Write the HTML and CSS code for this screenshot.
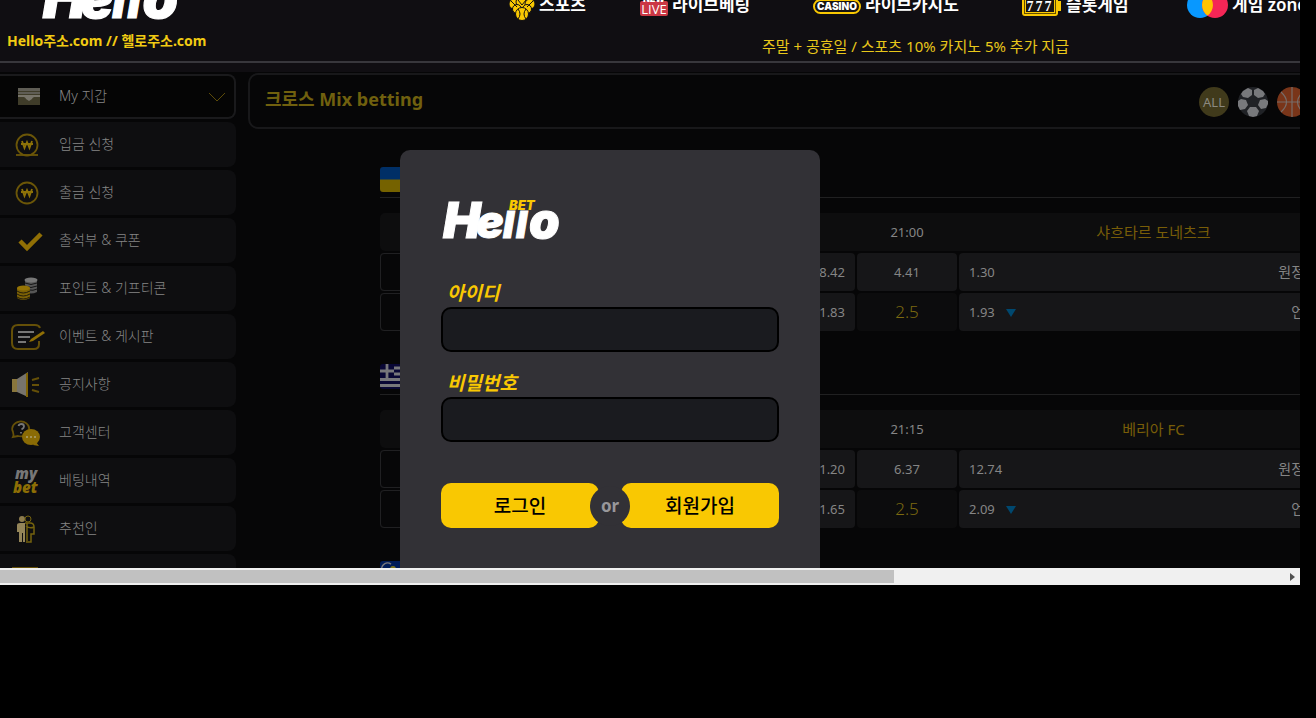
FILE: index.html
```
<!DOCTYPE html>
<html lang="ko">
<head>
<meta charset="utf-8">
<title>Hello BET</title>
<link rel="stylesheet" href="styles.css">
</head>
<body>
<svg class="defs" aria-hidden="true">
  <symbol id="logo" viewBox="0 0 120 44">
    <g class="logo-letters">
      <text x="2" y="40" font-size="50">H</text>
      <text x="35" y="40" font-size="46">e</text>
      <text x="62" y="40" font-size="37">l</text>
      <text x="75" y="40" font-size="37">l</text>
      <text x="88" y="40" font-size="49">o</text>
    </g>
    <text class="logo-bet" x="68" y="12" font-size="13">BET</text>
  </symbol>
</svg>
<div class="screen">
  <header class="header">
    <div class="brand">
      <svg class="brand-logo" role="img" aria-label="Hello BET"><use href="#logo"/></svg>
      <p class="address">Hello주소.com // 헬로주소.com</p>
    </div>
    <div class="top">
      <nav class="nav">
        <a href="#"><svg width="26" height="30" viewBox="0 0 26 30"><g fill="#f9c802" stroke="#100e12"><circle cx="5" cy="12" r="5"/><circle cx="13" cy="10" r="6"/><circle cx="21" cy="12" r="5"/><circle cx="8" cy="17" r="4.500"/><circle cx="18" cy="17" r="4.500"/><circle cx="13" cy="22" r="6.500"/></g><path d="M9 17q4 5 0 10M17 17q-4 5 0 10M2 9l6 6M24 9l-6 6M9 8l4 5 4-5" fill="none" stroke="#100e12"/></svg>스포츠</a>
        <a href="#"><svg width="28" height="24" viewBox="0 0 28 24"><rect y="9" width="28" height="15" rx="2" fill="#cb3744"/><text x="14" y="10" class="i-new">NEW</text><text x="14" y="22" class="i-live">LIVE</text></svg>라이브베팅</a>
        <a href="#"><svg width="48" height="23" viewBox="0 0 48 23"><rect x="1" y="8" width="46" height="13" rx="6.500" fill="#161413" stroke="#f9c802" stroke-width="2"/><text x="24" y="18" class="i-casino">CASINO</text></svg>라이브카지노</a>
        <a href="#"><svg width="40" height="24" viewBox="0 0 40 24"><rect y="1" width="36" height="23" rx="3" fill="#f9c802"/><rect x="2.500" y="3.500" width="31" height="18" fill="none" stroke="#624d00"/><rect x="4" y="8" width="28" height="12" fill="#171310"/><path d="M36 9h3v10h-3z" fill="#f9c802"/><text x="18" y="19" class="i-slot">777</text></svg>슬롯게임</a>
        <a href="#"><svg width="41" height="26" viewBox="0 0 41 26"><circle cx="13" cy="13" r="13" fill="#0898ff"/><circle cx="28" cy="13" r="13" fill="#f52656"/><path d="M20.500 2.400a13 13 0 0 1 0 21.200a13 13 0 0 1 0-21.200" fill="#ffc400"/></svg>게임 zone</a>
      </nav>
      <p class="notice">주말 + 공휴일 / 스포츠 10% 카지노 5% 추가 지급</p>
    </div>
  </header>

  <div class="body">
    <aside class="side">
      <a class="item wallet" href="#"><svg viewBox="0 0 36 36"><path d="M9 9h22v17H9z" fill="#3f3c29"/><path d="M9 9h22v3H9zM9 13h22v2H9z" fill="#5f5d55"/><path d="M9 16h22v2h-6q-2 1-2 2l-3 2-3-2q0-1-2-2H9z" fill="#77746a"/></svg><span>My 지갑</span><svg class="chev" viewBox="0 0 18 10"><path d="M1 1l8 8 8-8" fill="none" stroke="#5c4b08"/></svg></a>
      <a class="item" href="#"><svg viewBox="0 0 36 36"><g fill="none" stroke="#6b5608" stroke-width="1.800"><circle cx="18" cy="18" r="10.500"/><path d="M7 28h22"/><path d="M13 14l2.500 7 2.500-6 2.500 6 2.500-7M12 17h12" stroke="#8d7208"/></g></svg><span>입금 신청</span></a>
      <a class="item" href="#"><svg viewBox="0 0 36 36"><g fill="none" stroke="#6b5608" stroke-width="1.800"><circle cx="18" cy="18" r="10.500"/><path d="M13 14l2.500 7 2.500-6 2.500 6 2.500-7M12 17h12" stroke="#8d7208"/></g></svg><span>출금 신청</span></a>
      <a class="item" href="#"><svg viewBox="0 0 36 36"><path d="M11 18l7 7 14-14" fill="none" stroke="#906f05" stroke-width="4.500"/></svg><span>출석부 &amp; 쿠폰</span></a>
      <a class="item" href="#"><svg viewBox="0 0 36 36"><path d="M16 9v12q6 3 12 0V9" fill="#565656"/><ellipse cx="22" cy="9" rx="6.500" ry="2.500" fill="#777"/><path d="M16 12q6 3 12 0M16 15q6 3 12 0M20 19q4 1 8-1" fill="none" stroke="#151516"/><path d="M8 17v10q6 4 13 0V17" fill="#7c6105"/><ellipse cx="14.500" cy="17" rx="6.500" ry="2.500" fill="#957406"/><path d="M8 20q6 4 13 0M8 23q6 4 13 0M8 26q6 4 13 0" fill="none" stroke="#221c0a"/></svg><span>포인트 &amp; 기프티콘</span></a>
      <a class="item" href="#"><svg viewBox="0 0 36 36"><path d="M31 9q-1-3-5-3H9q-6 0-6 6v12q0 6 6 6h16q5 0 5-5v-3" fill="none" stroke="#655008" stroke-width="2"/><path d="M9 13h16M9 18h12M9 23h8" stroke="#777" stroke-width="2.200"/><path d="M22 20l12-8 2 2-12 8-4 1z" fill="#906f05"/></svg><span>이벤트 &amp; 게시판</span></a>
      <a class="item" href="#"><svg viewBox="0 0 36 36"><path d="M3 12h5v13H3z" fill="#89763c"/><path d="M8 12l11-7v25L8 25z" fill="#77746c"/><path d="M18 6v24" stroke="#806405" stroke-width="2"/><path d="M23 13l7-2M23 18h7M23 23l7 2" stroke="#655008" stroke-width="2"/></svg><span>공지사항</span></a>
      <a class="item" href="#"><svg viewBox="0 0 36 36"><path d="M4 22q1-2 0-5a8.500 7.500 0 1 1 5 4z" fill="none" stroke="#655008" stroke-width="1.800"/><path d="M9.500 11q.5-2 3-2t2.500 2.500q0 1.500-2.500 3M12 17v1.500" fill="none" stroke="#777" stroke-width="1.800"/><ellipse cx="22" cy="22" rx="9" ry="8" fill="#8a6b05"/><path d="M27 27l3 4-6-1z" fill="#8a6b05"/><g fill="#ada276"><circle cx="18" cy="22" r="1"/><circle cx="22" cy="22" r="1"/><circle cx="26" cy="22" r="1"/></g></svg><span>고객센터</span></a>
      <a class="item" href="#"><svg viewBox="0 0 36 36"><text x="6" y="16" class="i-my">my</text><text x="4" y="30" class="i-bet">bet</text></svg><span>베팅내역</span></a>
      <a class="item" href="#"><svg viewBox="0 0 36 36"><circle cx="13" cy="8" r="3" fill="#8d7c4d"/><circle cx="19" cy="8" r="3" fill="none" stroke="#75630e"/><path d="M8 14q0-2 3-2h5v19h-2v-9h-1v9h-3V21H8z" fill="#948559"/><path d="M16 12h5q4 0 4 4v7h-3v8h-5" fill="none" stroke="#75630e" stroke-width="1.500"/><path d="M18 12v18M17 15q4 3 8 1" stroke="#75630e" fill="none" stroke-width="1.500"/></svg><span>추천인</span></a>
      <a class="item" href="#"><svg viewBox="0 0 36 36"><rect x="3" y="8" width="26" height="20" fill="#655008"/></svg></a>
    </aside>

    <main class="main">
      <div class="title">
        <h1>크로스 Mix betting</h1>
        <div class="sports">
          <button type="button" class="all">ALL</button>
          <button type="button" aria-label="축구"><svg viewBox="0 0 30 30"><circle cx="15" cy="15" r="15" fill="#202226"/><g fill="#78797c"><path d="M5 4l5-3 4 2v5l-4 3-5-1-2-3z"/><path d="M25 4l-5-3-4 2v5l4 3 5-1 2-3z"/><path d="M0 14l3-2 5 1 2 5-3 4-5 1-2-4z"/><path d="M30 14l-3-2-5 1-2 5 3 4 5-1 2-4z"/><path d="M12 20h6l3 4-2 5-4 1-4-1-2-5z"/></g></svg></button>
          <button type="button" aria-label="농구"><svg viewBox="0 0 30 30"><circle cx="15" cy="15" r="15" fill="#793519"/><path d="M15 0v30M0 15h30M4 5q11 10 0 20M26 5q-11 10 0 20" fill="none" stroke="#776d69" stroke-width="1.200"/></svg></button>
        </div>
      </div>

      <section class="league">
        <div class="league-head"><svg class="flag" viewBox="0 0 38 25"><path fill="#002f66" d="M0 0h38v13H0z"/><path fill="#756200" d="M0 12.500h38V25H0z"/></svg></div>
        <div class="grid">
          <div class="head"></div><div class="head time">21:00</div><div class="head away">샤흐타르 도네츠크</div>
          <div class="cell home"><span class="pick"></span><span>8.42</span></div><div class="cell mid">4.41</div><div class="cell right"><span>1.30</span><span class="side-name">원정승</span></div>
          <div class="cell home"><span class="pick"></span><span>1.83</span></div><div class="cell mid line">2.5</div><div class="cell right"><span>1.93<i class="down"></i></span><span class="side-name">언더</span></div>
        </div>
      </section>
      <section class="league">
        <div class="league-head"><svg class="flag" viewBox="0 0 38 25"><path fill="#090735" d="M0 0h38v25H0z"/><path d="M0 15.500h38M0 21.500h38M14 4h24M14 10h24M7 0v14M0 7h14" stroke="#77777b" stroke-width="2.800"/></svg></div>
        <div class="grid">
          <div class="head"></div><div class="head time">21:15</div><div class="head away">베리아 FC</div>
          <div class="cell home"><span class="pick"></span><span>1.20</span></div><div class="cell mid">6.37</div><div class="cell right"><span>12.74</span><span class="side-name">원정승</span></div>
          <div class="cell home"><span class="pick"></span><span>1.65</span></div><div class="cell mid line">2.5</div><div class="cell right"><span>2.09<i class="down"></i></span><span class="side-name">언더</span></div>
        </div>
      </section>
      <section class="league">
        <div class="league-head"><svg class="flag" viewBox="0 0 38 25"><path fill="#001b58" d="M0 0h38v25H0z"/><path d="M11 3a6 6 0 1 0 0 10" fill="none" stroke="#77777b" stroke-width="1.500"/><circle cx="13" cy="8" r="3" fill="#7c7520"/></svg></div>
      </section>
    </main>
  </div>

  <form class="login">
    <svg class="login-logo" role="img" aria-label="Hello BET"><use href="#logo"/></svg>
    <div class="field"><label for="uid">아이디</label><input id="uid" type="text"></div>
    <div class="field"><label for="upw">비밀번호</label><input id="upw" type="password"></div>
    <div class="actions"><button type="submit">로그인</button><span class="or">or</span><button type="button">회원가입</button></div>
  </form>
</div>
<div class="scrollbar"><div class="thumb"></div><svg class="arrow" viewBox="0 0 5 8"><path d="M0 0l5 4-5 4z" fill="#505050"/></svg></div>
</body>
</html>
```

FILE: styles.css
```
* { box-sizing: border-box; }
body {
  margin: 0;
  min-height: 100vh;
  padding-right: 16px;
  background: #000;
  color: #858585;
  font: 13px/20px "Noto Sans", "Noto Sans CJK KR", sans-serif;
  overflow: hidden;
}
a { color: inherit; text-decoration: none; }
p, h1 { margin: 0; }
button { border: 0; padding: 0; font: inherit; cursor: pointer; }
.defs { position: absolute; width: 0; height: 0; }
.screen {
  position: relative;
  height: calc(100vh - 150px);
  background: #060607;
  overflow: hidden;
}

/* Header */
.header {
  display: flex;
  height: 72px;
  overflow: hidden;
  background:
    linear-gradient(#38373c, #38373c) 0 61px / 100% 2px no-repeat,
    #100e12;
}
.brand { flex: 0 0 509px; }
.brand-logo { display: block; width: 140px; height: 51px; margin: -28px 0 0 40px; }
.address {
  margin: 8px 0 0 7px;
  color: #f2cb12;
  font-size: 14px;
  font-weight: 700;
}
.logo-letters {
  font-family: Inter, sans-serif;
  font-weight: 900;
  font-style: italic;
  fill: #fff;
  stroke: #fff;
  stroke-width: 1;
}
.logo-bet {
  font-family: Inter, sans-serif;
  font-weight: 900;
  font-style: italic;
  fill: #f9c802;
}
.nav {
  display: grid;
  grid-template-columns: 131px 173px 209px 165px 120px;
  height: 30px;
  margin-top: -10px;
}
.nav a {
  display: flex;
  align-items: flex-start;
  gap: 4px;
  color: #fff;
  font-size: 17px;
  font-weight: 600;
  line-height: 30px;
  white-space: nowrap;
}
.nav svg { flex: none; align-self: flex-start; margin-top: 2px; }
.i-new, .i-live, .i-casino, .i-slot { fill: #fff; text-anchor: middle; }
.i-new { font: 900 9px Inter, sans-serif; }
.i-live { font: 13px "Open Sans", sans-serif; }
.i-casino { font: 900 10px Inter, sans-serif; }
.i-slot { font: 700 14px "Liberation Serif", serif; letter-spacing: 2px; }
.notice {
  margin: 16px 0 0 253px;
  color: #e8c71a;
  font-size: 15px;
  white-space: nowrap;
}

/* Layout */
.body { display: flex; gap: 12px; }
.side { flex: 0 0 236px; display: flex; flex-direction: column; gap: 3px; padding-top: 2px; }
.item {
  display: flex;
  flex: none;
  align-items: center;
  height: 45px;
  padding-left: 9px;
  border-radius: 0 8px 8px 0;
  background: #0e0e10;
  color: #858585;
  font-size: 14px;
  font-weight: 300;
}
.item svg { width: 36px; height: 36px; margin-right: 14px; }
.item span { flex: 1; padding-bottom: 2px; }
.wallet { background: #050505; border: 2px solid #1a1a1c; border-left: 0; }
.item .chev { width: 18px; height: 10px; margin-right: 8px; }
.i-my, .i-bet { font: italic 900 15px "Open Sans", sans-serif; fill: #777; }
.i-bet { fill: #8d6e05; }
.main { flex: none; width: 1100px; }
.title {
  display: flex;
  align-items: center;
  height: 56px;
  margin-top: 1px;
  padding-left: 15px;
  border: 2px solid #18181a;
  border-radius: 10px;
}
h1 { width: 934px; color: #70600e; font-size: 18px; line-height: 24px; font-weight: 700; padding-bottom: 4px; }
.sports { display: flex; gap: 9px; padding-top: 2px; }
.sports button { width: 30px; height: 30px; background: none; }
.sports svg { display: block; width: 30px; height: 30px; }
.sports .all { border-radius: 50%; background: #403a1b; color: #8b8980; }

/* Matches */
.league { width: 968px; margin-left: 132px; padding-top: 38px; }
.league + .league { padding-top: 33px; }
.league-head { height: 31px; border-bottom: 1px solid #202021; }
.flag { display: block; width: 38px; height: 25px; border-radius: 3px; }
.grid {
  display: grid;
  grid-template-columns: 475px 100px 1fr;
  gap: 2px;
  margin-top: 15px;
}
.head, .cell { display: flex; align-items: center; height: 38px; }
.head { background: #0d0d0e; box-shadow: 2px 0 #0d0d0e; }
.head:first-child { border-radius: 5px 0 0 5px; }
.time, .mid { justify-content: center; }
.away { justify-content: center; color: #785d08; font-size: 15px; }
.cell { border-radius: 4px; background: #161618; }
.home { justify-content: space-between; padding-right: 10px; }
.pick { width: 100px; height: 38px; border: 1px solid #202022; border-radius: 4px; background: #070708; }
.line { background: #0c0c0d; color: #7c6a10; font-size: 17px; font-weight: 300; }
.right { justify-content: space-between; padding: 0 31px 0 10px; }
.side-name { font-size: 14px; }
.down {
  display: inline-block;
  margin-left: 11px;
  border: 5px solid transparent;
  border-top: 8px solid #00486f;
  border-bottom: 0;
}

/* Login dialog */
.login {
  position: absolute;
  top: 150px;
  left: 400px;
  width: 420px;
  padding: 48px 41px 60px;
  border-radius: 10px;
  background: #323136;
}
.login-logo { display: block; width: 120px; height: 44px; margin-bottom: 38px; }
.field { margin-bottom: 18px; }
.field label {
  display: block;
  padding: 0 0 1px 6px;
  color: #f9c802;
  font-size: 19px;
  font-style: italic;
  font-weight: 700;
  line-height: 26px;
}
.field input {
  display: block;
  width: 100%;
  height: 45px;
  padding: 0 12px;
  border: 2px solid #000;
  border-radius: 10px;
  background: #1a1b1f;
  color: #fff;
}
.actions { display: flex; align-items: center; margin-top: 41px; }
.actions button {
  flex: 1;
  height: 45px;
  border-radius: 10px;
  background: #f9c802;
  color: #000;
  font-size: 19px;
  font-weight: 500;
}
.or {
  z-index: 1;
  width: 40px;
  height: 40px;
  margin: 0 -9px;
  border-radius: 50%;
  background: #323136;
  color: #98979b;
  font-size: 17px;
  font-weight: 700;
  line-height: 40px;
  text-align: center;
}

/* Horizontal scrollbar */
.scrollbar {
  display: flex;
  align-items: center;
  justify-content: space-between;
  height: 17px;
  padding-right: 5px;
  background: #f0f0f0;
}
.thumb { width: 69%; height: 13px; background: #c1c1c1; }
.arrow { width: 5px; height: 8px; }
```
